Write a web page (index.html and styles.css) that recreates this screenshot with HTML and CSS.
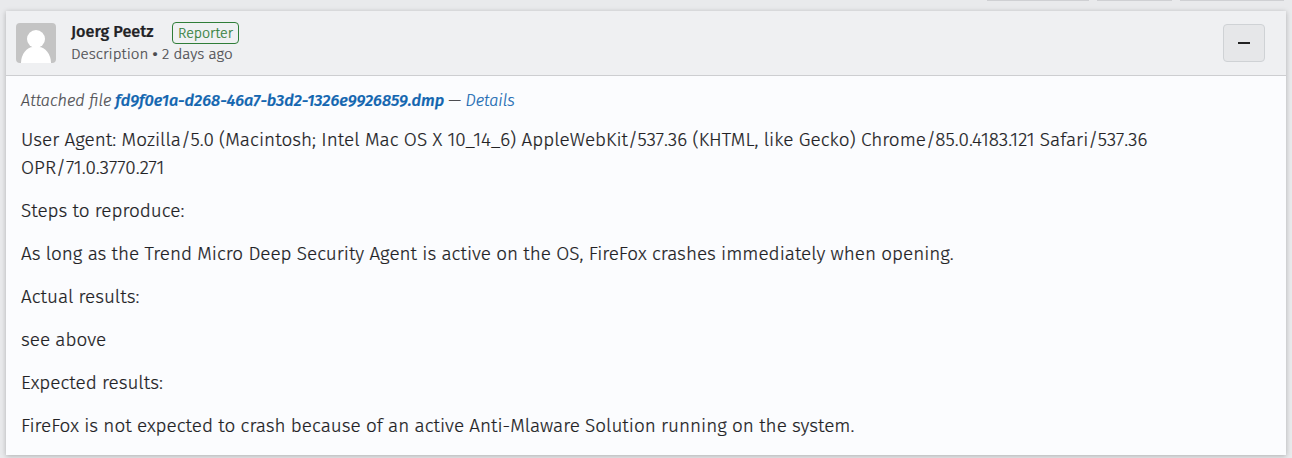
FILE: index.html
```html
<!DOCTYPE html>
<html lang="en">
  <head>
    <meta charset="UTF-8" />
    <meta name="viewport" content="width=device-width, initial-scale=1.0" />
    <title>Bug comment</title>
    <link rel="stylesheet" href="styles.css">
  </head>
  <body>
    <div class="toolbar">
      <span class="tool tool-wide"></span>
      <span class="tool"></span>
      <span class="tool tool-last"></span>
    </div>

    <div class="comment">
      <div class="comment-header">
        <svg class="avatar" viewBox="0 0 40 40">
          <rect width="40" height="40" fill="#c4c4c4" />
          <circle cx="20" cy="16" r="9" fill="#fff" />
          <path d="M5 40C5 31 11 24 17 24h6c6 0 12 7 12 16z" fill="#fff" />
        </svg>
        <div class="author">
          <div class="author-row">
            <span class="name">Joerg Peetz</span>
            <span class="badge">Reporter</span>
          </div>
          <div class="meta">Description <span class="dot">•</span> 2 days ago</div>
        </div>
        <button class="collapse-btn" aria-label="Collapse">
          <span class="minus"></span>
        </button>
      </div>

      <div class="comment-body">
        <div class="attachment">
          <span class="label">Attached file</span>
          <a href="#" class="file">fd9f0e1a-d268-46a7-b3d2-1326e9926859.dmp</a>
          <span class="details">— <a href="#">Details</a></span>
        </div>
        <p>
          <span class="agent">User Agent: Mozilla/5.0 (Macintosh; Intel Mac OS X 10_14_6) AppleWebKit/537.36 (KHTML, like Gecko) Chrome/85.0.4183.121 Safari/537.36</span><br />
          <span class="agent">OPR/71.0.3770.271</span>
        </p>
        <p>Steps to reproduce:</p>
        <p>As long as the Trend Micro Deep Security Agent is active on the OS, FireFox crashes immediately when opening.</p>
        <p>Actual results:</p>
        <p>see above</p>
        <p>Expected results:</p>
        <p>FireFox is not expected to crash because of an active Anti-Mlaware Solution running on the system.</p>
      </div>
    </div>
  </body>
</html>
```
FILE: styles.css
```css
body {
  margin: 0;
  height: 458px;
  overflow: hidden;
  background-color: #e9eaec;
  font-family: "Fira Sans", "Noto Sans", sans-serif;
  font-weight: 300;
  color: #222225;
  -webkit-text-stroke-width: 0.2px;
}

.toolbar {
  display: flex;
  justify-content: flex-end;
  gap: 8px;
  height: 11px;
  padding-right: 8px;
}

.tool {
  width: 75px;
  height: 1px;
  background-color: #cfd0d3;
}

.tool-wide {
  width: 102px;
}

.tool-last {
  width: 104px;
}

.comment {
  height: 444px;
  margin: 0 6px;
  background-color: #fbfcfe;
  box-shadow: 0 1px 5px rgba(0, 0, 0, 0.25);
}

.comment-header {
  box-sizing: border-box;
  display: flex;
  align-items: center;
  height: 65px;
  padding: 0 21px 0 10px;
  background-color: #eff0f2;
  border-bottom: 1px solid #cdced1;
}

.avatar {
  width: 40px;
  height: 40px;
  border-radius: 4px;
}

.author {
  flex: 1;
  margin-left: 15px;
}

.author-row {
  display: flex;
  height: 22px;
}

.name {
  width: 101px;
  font-size: 16.2px;
  font-weight: 500;
  line-height: 19px;
  white-space: nowrap;
}

.badge {
  box-sizing: border-box;
  width: 67px;
  height: 22px;
  border: 1px solid #2f7d38;
  border-radius: 4px;
  color: #2f7d38;
  font-size: 14.2px;
  line-height: 21px;
  text-align: center;
}

.meta {
  color: #4c4c50;
  font-size: 15.2px;
  line-height: 20px;
  white-space: nowrap;
}

.dot {
  font-weight: 500;
}

.collapse-btn {
  display: flex;
  align-items: center;
  justify-content: center;
  width: 42px;
  height: 38px;
  padding: 0;
  background-color: #e6e7e9;
  border: 1px solid #cfd2d5;
  border-radius: 4px;
}

.minus {
  width: 12px;
  height: 2px;
  background-color: #222;
}

.comment-body {
  padding: 14px 15px 0;
  font-size: 18.92px;
  line-height: 28px;
  white-space: nowrap;
}

.attachment {
  display: flex;
  gap: 4px;
  height: 22px;
  margin-bottom: 14px;
  color: #4c4c50;
  font-size: 16.3px;
  font-style: italic;
  line-height: 22px;
}

.attachment a {
  color: #1366b0;
  text-decoration: none;
}

.attachment .file {
  font-weight: 500;
}

.comment-body p {
  margin: 0 0 15px;
}

.agent {
  letter-spacing: 0.03px;
}
```
